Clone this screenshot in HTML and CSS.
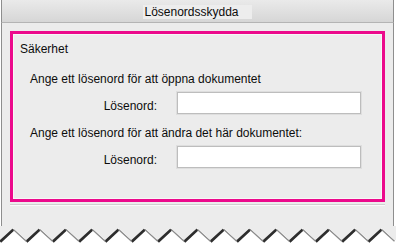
FILE: index.html
```html
<!DOCTYPE html>
<html lang="sv">
<head>
<meta charset="utf-8">
<title>Lösenordsskydda</title>
<link rel="stylesheet" href="styles.css">
</head>
<body>
<div class="window">
  <div class="titlebar"><span class="title">Lösenordsskydda</span></div>
  <div class="content">
    <section class="group">
      <div class="group-inner">
        <div class="legend">Säkerhet</div>
        <div class="prompt">Ange ett lösenord för att öppna dokumentet</div>
        <div class="field-row">
          <label class="field-label">Lösenord:</label>
          <div class="field-input"></div>
        </div>
        <div class="prompt prompt-second">Ange ett lösenord för att ändra det här dokumentet:</div>
        <div class="field-row">
          <label class="field-label">Lösenord:</label>
          <div class="field-input"></div>
        </div>
      </div>
    </section>
    <div class="separator"></div>
  </div>
  <svg class="tear" width="396" height="19" viewBox="0 0 396 19" xmlns="http://www.w3.org/2000/svg">
    <defs>
      <filter id="soft" x="-10%" y="-50%" width="120%" height="200%">
        <feGaussianBlur stdDeviation="0.4"/>
      </filter>
    </defs>
    <g filter="url(#soft)">
      <path d="M0 15.5L13.15 3.3M26.3 15.5L39.45 3.3M52.6 15.5L65.75 3.3M78.9 15.5L92.05 3.3M105.2 15.5L118.35 3.3M131.5 15.5L144.65 3.3M157.8 15.5L170.95 3.3M184.1 15.5L197.25 3.3M210.4 15.5L223.55 3.3M236.7 15.5L249.85 3.3M263 15.5L276.15 3.3M289.3 15.5L302.45 3.3M315.6 15.5L328.75 3.3M341.9 15.5L355.05 3.3M368.2 15.5L381.35 3.3" stroke="#2e2e2e" stroke-width="3.4" fill="none"/>
      <path d="M13.15 3.3L26.3 15.3M39.45 3.3L52.6 15.3M65.75 3.3L78.9 15.3M92.05 3.3L105.2 15.3M118.35 3.3L131.5 15.3M144.65 3.3L157.8 15.3M170.95 3.3L184.1 15.3M197.25 3.3L210.4 15.3M223.55 3.3L236.7 15.3M249.85 3.3L263 15.3M276.15 3.3L289.3 15.3M302.45 3.3L315.6 15.3M328.75 3.3L341.9 15.3M355.05 3.3L368.2 15.3M381.35 3.3L394.5 15.3" stroke="#8c8c8c" stroke-width="1.4" fill="none"/>
    </g>
    <polygon fill="#ececec" points="0,0 396,0 396,14 394.5,14 381.35,2 368.2,14 355.05,2 341.9,14 328.75,2 315.6,14 302.45,2 289.3,14 276.15,2 263,14 249.85,2 236.7,14 223.55,2 210.4,14 197.25,2 184.1,14 170.95,2 157.8,14 144.65,2 131.5,14 118.35,2 105.2,14 92.05,2 78.9,14 65.75,2 52.6,14 39.45,2 26.3,14 13.15,2 0,14"/>
  </svg>
</div>
</body>
</html>
```

FILE: styles.css
```css
html, body {
  margin: 0;
  padding: 0;
  background: #ffffff;
}

body {
  width: 396px;
  height: 245px;
  overflow: hidden;
  font-family: "Liberation Sans", Arial, sans-serif;
  font-size: 12px;
  line-height: 14px;
  color: #0c0c0c;
}

.window {
  display: flex;
  flex-direction: column;
}

.titlebar {
  height: 22px;
  margin: 0 2px 0 1px;
  border-left: 1px solid #8e8e8e;
  border-right: 1px solid #8e8e8e;
  border-bottom: 1px solid #b4b4b4;
  background: linear-gradient(#eaeaea, #d6d6d6);
  display: flex;
  justify-content: center;
  align-items: flex-start;
}

.title {
  margin-top: 5px;
  padding: 0 13px 0 1px;
  line-height: 14px;
  background: #ededed;
  color: #0c0c0c;
}

.content {
  margin: 0 2px 0 1px;
  border-left: 1px solid #8e8e8e;
  border-right: 1px solid #8e8e8e;
  background: #ececec;
  padding: 8px 8px 0 8px;
  height: 203px;
  box-sizing: border-box;
}

.group {
  border: 3px solid #ec0a8c;
  height: 171px;
  box-sizing: border-box;
}

.group-inner {
  height: 100%;
  box-sizing: border-box;
  border: 1px solid #f7f7f7;
  padding: 7px 0 0 6px;
}

.legend {
  height: 14px;
}

.prompt {
  margin-top: 16px;
  padding-left: 10px;
  height: 14px;
  white-space: nowrap;
}

.prompt-second {
  margin-top: 12px;
}

.field-row {
  display: flex;
  align-items: flex-start;
  margin-top: 6px;
}

.field-label {
  width: 137px;
  text-align: right;
  margin-top: 7px;
  margin-right: 20px;
}

.field-input {
  width: 184px;
  height: 22px;
  box-sizing: border-box;
  background: #ffffff;
  border: 1px solid #bdbdbd;
  box-shadow: 0 0 0 1px #dedede;
}

.separator {
  margin-top: 2px;
  height: 1px;
  border-bottom: 1px solid #fafafa;
  background: #d0d0d0;
}

.tear {
  display: block;
}
```
